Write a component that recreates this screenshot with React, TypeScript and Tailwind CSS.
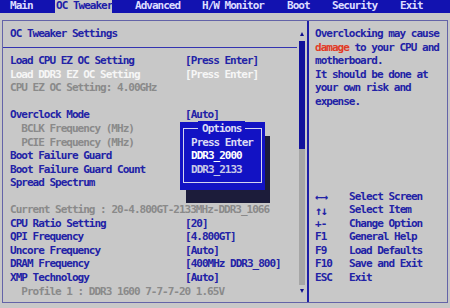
import React from "react";

type Tone = "blue" | "white" | "gray";

type Row = {
  label: string;
  value?: string;
  tone?: Tone;
  indent?: boolean;
};

const rows: Row[] = [
  { label: "Load CPU EZ OC Setting", value: "[Press Enter]" },
  { label: "Load DDR3 EZ OC Setting", value: "[Press Enter]", tone: "white" },
  { label: "CPU EZ OC Setting: 4.00GHz", tone: "gray" },
  { label: "" },
  { label: "Overclock Mode", value: "[Auto]" },
  { label: "BCLK Frequency (MHz)", tone: "gray", indent: true },
  { label: "PCIE Frequency (MHz)", tone: "gray", indent: true },
  { label: "Boot Failure Guard" },
  { label: "Boot Failure Guard Count" },
  { label: "Spread Spectrum" },
  { label: "" },
  { label: "Current Setting : 20-4.800GT-2133MHz-DDR3_1066", tone: "gray" },
  { label: "CPU Ratio Setting", value: "[20]" },
  { label: "QPI Frequency", value: "[4.800GT]" },
  { label: "Uncore Frequency", value: "[Auto]" },
  { label: "DRAM Frequency", value: "[400MHz DDR3_800]" },
  { label: "XMP Technology", value: "[Auto]" },
  { label: "Profile 1 : DDR3 1600 7-7-7-20 1.65V", tone: "gray", indent: true },
];

const tabs = [
  { name: "Main", cls: "w-[55px] pl-[10px]" },
  { name: "OC Tweaker", cls: "w-[57px] pl-[1px] bg-[#c8c8c8] text-[#2020a8]" },
  { name: "Advanced", cls: "w-[90px] pl-[23px]" },
  { name: "H/W Monitor", cls: "w-[85px]" },
  { name: "Boot", cls: "w-[45px]" },
  { name: "Security", cls: "w-[68px]" },
  { name: "Exit", cls: "w-[40px]" },
];

const keys = [
  { k: "←→", d: "Select Screen", arrow: true },
  { k: "↑↓", d: "Select Item", arrow: true },
  { k: "+-", d: "Change Option" },
  { k: "F1", d: "General Help" },
  { k: "F9", d: "Load Defaults" },
  { k: "F10", d: "Save and Exit" },
  { k: "ESC", d: "Exit" },
];

const toneClass: Record<Tone, string> = {
  blue: "text-[#2222a6]",
  white: "text-[#f6f6f6]",
  gray: "text-[#8a8a8a]",
};

export default function App() {
  return (
    <div className="relative w-[450px] h-[308px] overflow-hidden bg-[#c8c8c8] font-['DejaVu_Sans_Mono',monospace] text-[11px] font-bold tracking-[-0.99px] whitespace-nowrap">
      {/* tab bar */}
      <div className="flex h-[13px] bg-[#1212b0] text-[#dcdcff]">
        {tabs.map((t) => (
          <div key={t.name} className={`flex items-center h-full ${t.cls}`}>
            {t.name}
          </div>
        ))}
      </div>

      {/* frame */}
      <div className="mt-[7px] ml-[2px] w-[446px] h-[283px] border border-[#6464a8] flex">
        {/* left panel */}
        <div className="w-[294px] pl-[7px] pt-[6.6px] flex flex-col">
          <div className="h-[13.55px] flex items-center text-[#2222a6]">OC Tweaker Settings</div>
          <div className="h-[13.55px] flex items-center -ml-[7px]">
            <div className="w-full h-px bg-[#3434b0]" />
          </div>
          {rows.map((r, i) => {
            const tone = toneClass[r.tone ?? "blue"];
            return (
              <div key={i} className={`h-[13.55px] flex items-center ${tone}`}>
                <div className={`w-[175px] ${r.indent ? "pl-[11.25px]" : ""}`}>{r.label}</div>
                {r.value && <div>{r.value}</div>}
              </div>
            );
          })}
        </div>

        {/* scrollbar */}
        <div className="w-[10px] pt-[6.1px] flex flex-col items-center">
          <div className="h-[13.55px] flex items-center">
            <div className="w-0 h-0 border-x-[2.5px] border-x-transparent border-b-[4px] border-b-[#10108a]" />
          </div>
          <div className="w-[6px] h-[108.4px] bg-[#12129c]" />
          <div className="w-[6px] h-[135.5px] bg-[#a6a6a6]" />
          <div className="h-[13.55px] flex items-center">
            <div className="w-0 h-0 border-x-[2.5px] border-x-transparent border-t-[4px] border-t-[#10108a]" />
          </div>
        </div>

        {/* right panel */}
        <div className="flex-1 border-l-2 border-[#1e1ea6] pl-[6px] pt-[6.6px] flex flex-col text-[#2222a6]">
          <div className="h-[13.55px] flex items-center">Overclocking may cause</div>
          <div className="h-[13.55px] flex items-center">
            <span className="text-[#e23a26]">damage</span>&nbsp;to your CPU and
          </div>
          <div className="h-[13.55px] flex items-center">motherboard.</div>
          <div className="h-[13.55px] flex items-center">It should be done at</div>
          <div className="h-[13.55px] flex items-center">your own risk and</div>
          <div className="h-[13.55px] flex items-center">expense.</div>
          <div className="h-[81.3px]" />
          {keys.map((k) => (
            <div key={k.d} className="h-[13.55px] flex items-center">
              <div className={`w-[34px] ${k.arrow ? "text-[12px] tracking-[-1.5px]" : ""}`}>{k.k}</div>
              <div>{k.d}</div>
            </div>
          ))}
        </div>
      </div>

      {/* options popup */}
      <div className="absolute left-[186px] top-[135.5px] w-[84px] h-[67.75px] bg-[#1c1c3a]" />
      <div className="absolute left-[180px] top-[122px] w-[85px] h-[67.75px] bg-[#1212c4]">
        <div className="absolute left-[3px] top-[6px] w-[79px] h-[55px] border border-[#d4d4ee]" />
        <div className="relative flex flex-col pt-[0.5px]">
          <div className="h-[13.55px] flex items-center pl-[18px]">
            <span className="bg-[#1212c4] px-[4px] text-[#dcdcf4]">Options</span>
          </div>
          <div className="h-[13.55px] flex items-center pl-[11px] text-[#dcdcf4]">Press Enter</div>
          <div className="h-[13.55px] flex items-center pl-[11px] text-white">DDR3_2000</div>
          <div className="h-[13.55px] flex items-center pl-[11px] text-[#c8c8e8]">DDR3_2133</div>
        </div>
      </div>
    </div>
  );
}
